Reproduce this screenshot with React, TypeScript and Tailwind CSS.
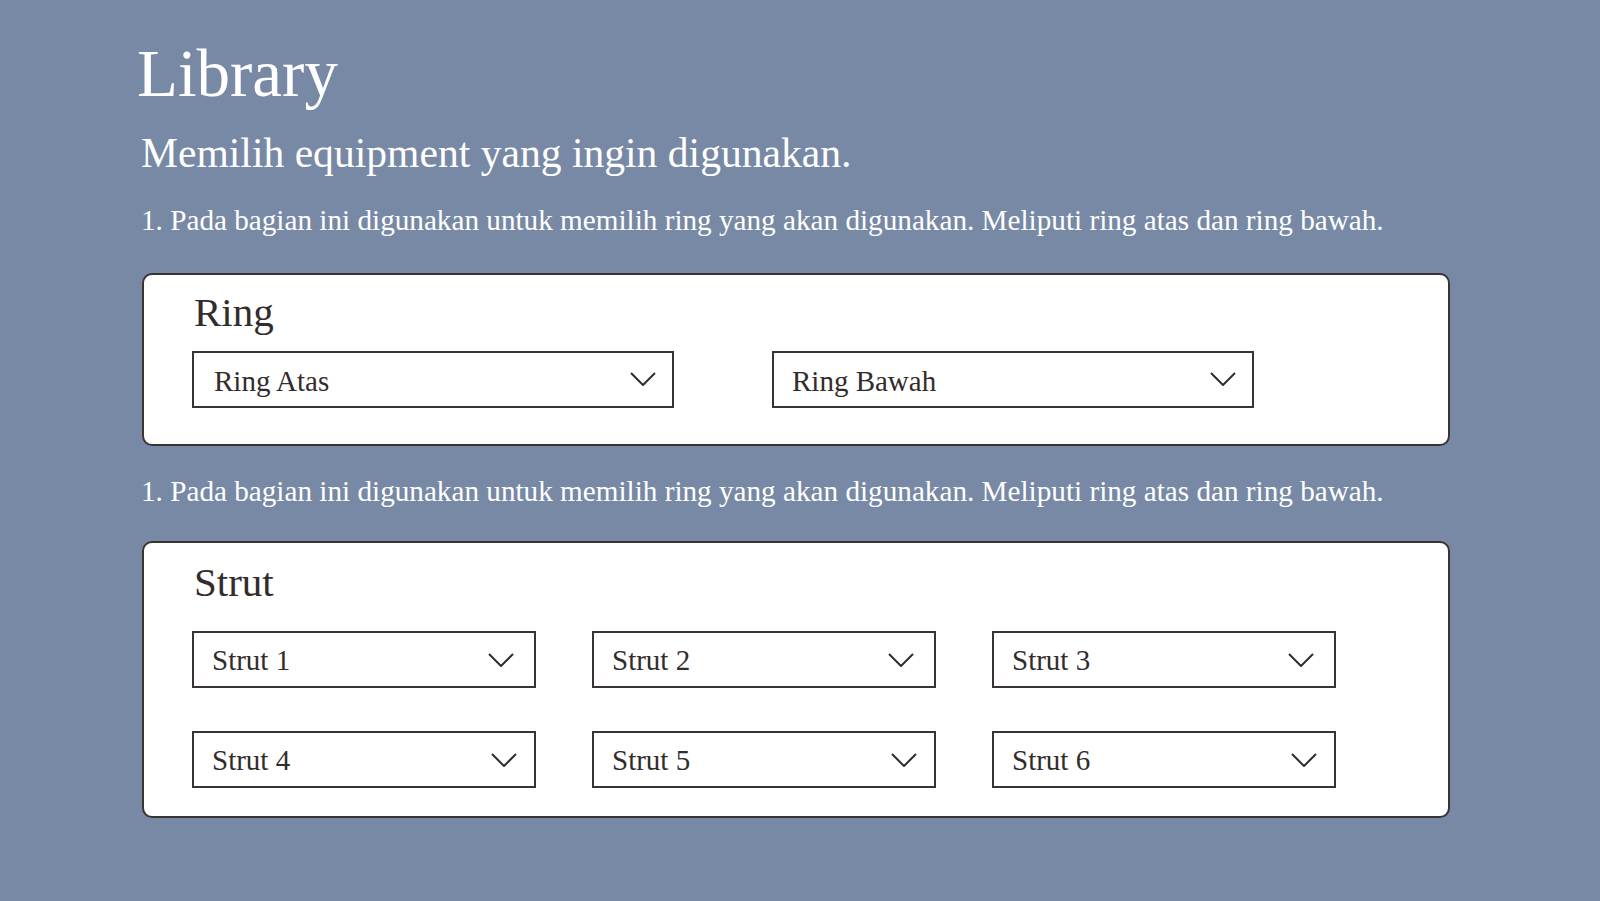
import React from "react";

function Chevron() {
  return (
    <svg width="26" height="14" viewBox="0 0 26 14" fill="none" className="shrink-0">
      <polyline points="1,1 13,13 25,1" stroke="#332c2c" strokeWidth="2" fill="none" />
    </svg>
  );
}

function Select({
  label,
  widthClass,
  padClass,
  textShift,
}: {
  label: string;
  widthClass: string;
  padClass: string;
  textShift: string;
}) {
  return (
    <div
      className={`${widthClass} h-[57px] border-2 border-[#393333] bg-white flex items-center justify-between ${padClass}`}
    >
      <span className={`text-[29px] leading-[1.15] text-[#332c2c] ${textShift}`}>{label}</span>
      <Chevron />
    </div>
  );
}

export default function App() {
  const desc =
    "1. Pada bagian ini digunakan untuk memilih ring yang akan digunakan. Meliputi ring atas dan ring bawah.";
  return (
    <div className="min-h-[901px] w-full bg-[#7889a6] font-['Liberation_Serif',serif] pl-[139px] pt-[40px] pb-[40px]">
      <h1 className="-ml-[2px] text-[67px] leading-none text-white">Library</h1>
      <p className="mt-[26px] ml-[2px] text-[41.6px] leading-none text-white">
        Memilih equipment yang ingin digunakan.
      </p>
      <p className="mt-[31px] ml-[2px] text-[29.2px] leading-none text-white">{desc}</p>

      <div className="mt-[38px] ml-[3px] w-[1308px] rounded-[10px] border-2 border-[#393333] bg-white pl-[48px] pt-[13px] pb-[36px]">
        <h2 className="ml-[2px] text-[41px] leading-[48px] text-[#332c2c]">Ring</h2>
        <div className="mt-[15px] flex gap-[98px]">
          <Select label="Ring Atas" widthClass="w-[482px]" padClass="pl-[20px] pr-[16px]" textShift="mt-[4px]" />
          <Select label="Ring Bawah" widthClass="w-[482px]" padClass="pl-[18px] pr-[16px]" textShift="mt-[4px]" />
        </div>
      </div>

      <p className="mt-[31px] ml-[2px] text-[29.2px] leading-none text-white">{desc}</p>

      <div className="mt-[35px] ml-[3px] w-[1308px] rounded-[10px] border-2 border-[#393333] bg-white pl-[48px] pt-[15px] pb-[28px]">
        <h2 className="ml-[2px] text-[41px] leading-[48px] text-[#332c2c]">Strut</h2>
        <div className="mt-[25px] grid grid-cols-[344px_344px_344px] gap-x-[56px] gap-y-[43px]">
          <Select label="Strut 1" widthClass="w-[344px]" padClass="pl-[18px] pr-[20px]" textShift="mt-[2px]" />
          <Select label="Strut 2" widthClass="w-[344px]" padClass="pl-[18px] pr-[20px]" textShift="mt-[2px]" />
          <Select label="Strut 3" widthClass="w-[344px]" padClass="pl-[18px] pr-[20px]" textShift="mt-[2px]" />
          <Select label="Strut 4" widthClass="w-[344px]" padClass="pl-[18px] pr-[17px]" textShift="mt-[2px]" />
          <Select label="Strut 5" widthClass="w-[344px]" padClass="pl-[18px] pr-[17px]" textShift="mt-[2px]" />
          <Select label="Strut 6" widthClass="w-[344px]" padClass="pl-[18px] pr-[17px]" textShift="mt-[2px]" />
        </div>
      </div>
    </div>
  );
}
